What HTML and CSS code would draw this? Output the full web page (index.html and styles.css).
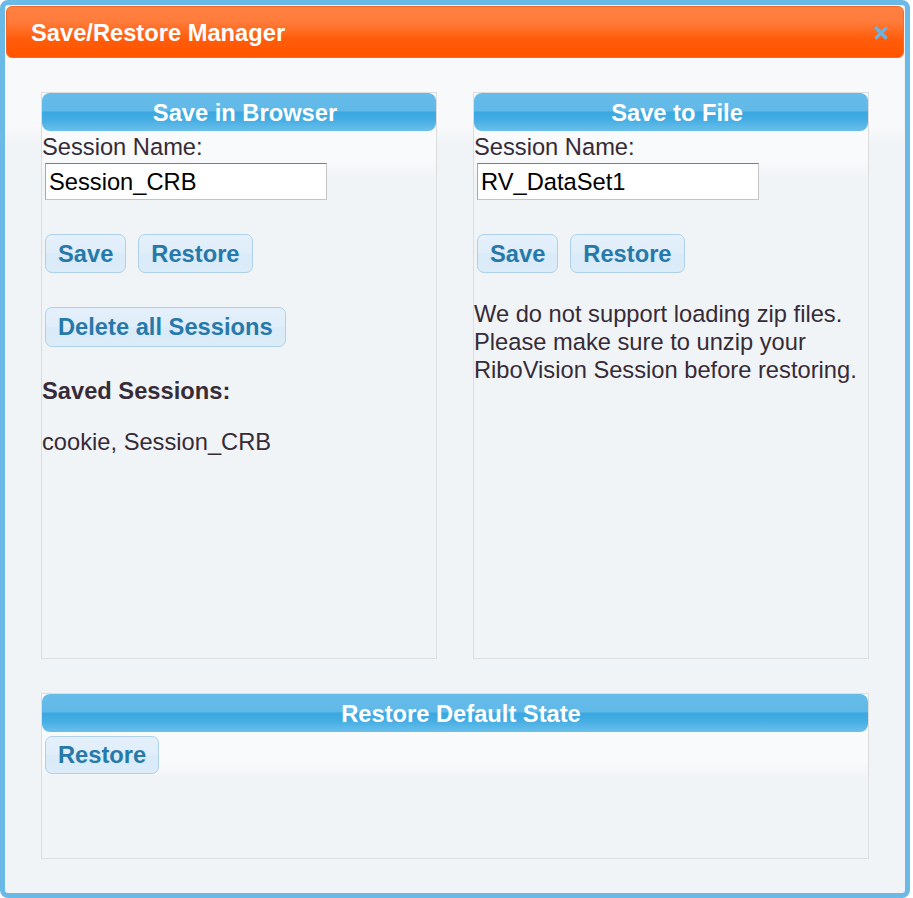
FILE: index.html
```html
<!DOCTYPE html>
<html>
<head>
<meta charset="utf-8">
<title>Save/Restore Manager</title>
<link rel="stylesheet" href="styles.css">
</head>
<body>
<div class="dialog">
  <div class="titlebar">
    <span class="title">Save/Restore Manager</span>
    <span class="close" aria-label="close">
      <svg width="14" height="14" viewBox="0 0 14 14">
        <path d="M2.5 2.5 L11.5 11.5 M11.5 2.5 L2.5 11.5" stroke="#6db3e2" stroke-width="3.2" stroke-linecap="square" fill="none"/>
      </svg>
    </span>
  </div>
  <div class="content">
    <section class="panel">
      <div class="panel-header">Save in Browser</div>
      <div class="label">Session Name:</div>
      <input class="field" type="text" value="Session_CRB">
      <div class="btn-row first-row">
        <button class="btn">Save</button>
        <button class="btn">Restore</button>
      </div>
      <div class="btn-row second-row">
        <button class="btn">Delete all Sessions</button>
      </div>
      <div class="saved-title">Saved Sessions:</div>
      <div class="saved-list">cookie, Session_CRB</div>
    </section>
    <section class="panel">
      <div class="panel-header">Save to File</div>
      <div class="label">Session Name:</div>
      <input class="field" type="text" value="RV_DataSet1">
      <div class="btn-row first-row">
        <button class="btn">Save</button>
        <button class="btn">Restore</button>
      </div>
      <p class="note">We do not support loading zip files. Please make sure to unzip your RiboVision Session before restoring.</p>
    </section>
    <section class="panel wide">
      <div class="panel-header">Restore Default State</div>
      <div class="btn-row default-row">
        <button class="btn">Restore</button>
      </div>
    </section>
  </div>
</div>
</body>
</html>
```

FILE: styles.css
```css
html, body {
  margin: 0;
  padding: 0;
  background: #ffffff;
}

body {
  font-family: "Liberation Sans", Arial, sans-serif;
  font-size: 23.7px;
  color: #362b36;
}

.dialog {
  box-sizing: border-box;
  width: 910px;
  height: 898px;
  border: 5px solid #6bb9e7;
  border-radius: 8px;
  padding: 1px;
  background: #f1f4f7;
  display: flex;
  flex-direction: column;
}

.titlebar {
  box-sizing: border-box;
  height: 52px;
  flex: 0 0 52px;
  border-radius: 6px;
  background: linear-gradient(to bottom, #ff8142 0%, #ff7b3a 30%, #ff5c0a 65%, #ff5500 100%);
  border: 1px solid #f7692a;
  display: flex;
  align-items: center;
  justify-content: space-between;
  padding: 2px 15px 0 24px;
}

.title {
  color: #ffffff;
  font-weight: bold;
  font-size: 23.7px;
  line-height: 28px;
}

.close {
  display: flex;
  width: 14px;
  height: 14px;
}

.content {
  flex: 1;
  padding: 34px 35px 0 35px;
  background: linear-gradient(to bottom, #f8f9fb 0px, #f8f9fb 66px, #f1f4f7 86px, #f1f4f7 100%);
  display: grid;
  grid-template-columns: 396px 396px;
  grid-template-rows: 567px 166px;
  column-gap: 36px;
  row-gap: 34px;
  align-content: start;
}

.panel {
  box-sizing: border-box;
  border: 1px solid #dddddd;
  background: linear-gradient(to bottom, #f9fafc 0px, #f9fafc 66px, #f1f4f7 84px, #f1f4f7 100%);
}

.panel.wide {
  grid-column: 1 / span 2;
}

.panel-header {
  box-sizing: border-box;
  height: 38px;
  border-radius: 8px;
  background: linear-gradient(to bottom, #66bce9 0%, #61b9e8 46%, #3ba8e1 51%, #44ade3 70%, #6ac0eb 100%);
  color: #ffffff;
  font-weight: bold;
  font-size: 23.7px;
  line-height: 36px;
  text-align: center;
  padding: 2px 0 0 12px;
}

.label {
  margin-top: 2px;
  line-height: 28px;
  height: 28px;
}

.field {
  display: block;
  box-sizing: border-box;
  width: 282px;
  height: 37px;
  margin: 2px 0 0 3px;
  padding: 1px 3px 0 3px;
  border: 1px solid #c4c4c4;
  border-top-color: #7d7d7d;
  border-left-color: #a9a9a9;
  background: #ffffff;
  font-family: "Liberation Sans", Arial, sans-serif;
  font-size: 23.7px;
  color: #000000;
  outline: none;
}

.btn-row {
  display: flex;
  gap: 12px;
  padding-left: 3px;
}

.first-row {
  margin-top: 34px;
}

.second-row {
  margin-top: 34px;
}

.default-row {
  margin-top: 4px;
}

.btn {
  box-sizing: border-box;
  height: 39px;
  padding: 1px 12px 0 12px;
  border: 1px solid #aed0ea;
  border-radius: 7px;
  background: linear-gradient(to bottom, #e4f0fb 0%, #e0eefa 48%, #d9eaf8 52%, #dcecf9 100%);
  color: #2779aa;
  font-family: "Liberation Sans", Arial, sans-serif;
  font-weight: bold;
  font-size: 23.7px;
  line-height: 36px;
  cursor: pointer;
}

.second-row .btn {
  height: 40px;
  line-height: 37px;
}

.default-row .btn {
  height: 38px;
  line-height: 35px;
}

.saved-title {
  margin-top: 30px;
  font-weight: bold;
  line-height: 28px;
}

.saved-list {
  margin-top: 23px;
  line-height: 28px;
}

.note {
  margin: 27px 0 0 0;
  line-height: 28px;
}
```
